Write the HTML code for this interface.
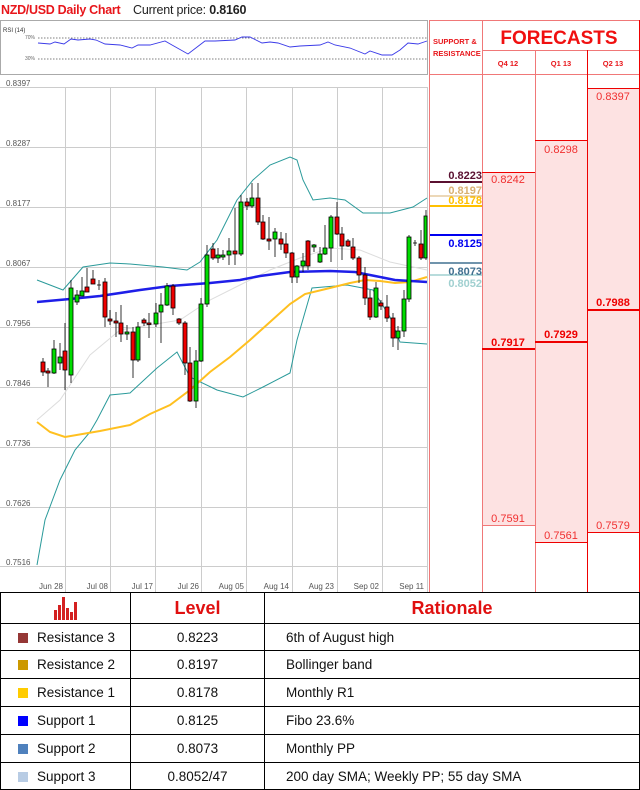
<!DOCTYPE html>
<html><head><meta charset="utf-8"><style>
*{margin:0;padding:0;box-sizing:border-box}
body{width:640px;height:790px;background:#fff;font-family:"Liberation Sans",sans-serif;position:relative;overflow:hidden}
.abs{position:absolute}
table{position:absolute;left:0;top:592px;width:640px;border-collapse:collapse;font-size:13.5px;color:#111;table-layout:fixed}
td{border:1px solid #000;padding:0;overflow:hidden;white-space:nowrap}
.sq{display:inline-block;width:10px;height:10px;margin:0 9px 0 17px;vertical-align:-1px}
</style></head><body>
<div class="abs" style="left:1px;top:3px;font-size:12.5px;font-weight:bold;color:#e8161b;letter-spacing:-0.3px">NZD/USD Daily Chart</div>
<div class="abs" style="left:133px;top:3px;font-size:12.5px;color:#222;letter-spacing:-0.2px">Current price: <b>0.8160</b></div>

<svg class="abs" style="left:0;top:0" width="640" height="592">
<rect x="0.5" y="20.5" width="427" height="54" fill="#fff" stroke="#aaa"/>
<text x="3" y="32" font-size="6" fill="#333">RSI (14)</text>
<text x="25" y="39" font-size="5" fill="#666">70%</text>
<text x="25" y="60" font-size="5" fill="#666">30%</text>
<line x1="38" y1="38" x2="427" y2="38" stroke="#555" stroke-dasharray="1.5,1.5" stroke-width="0.7"/>
<line x1="38" y1="59" x2="427" y2="59" stroke="#555" stroke-dasharray="1.5,1.5" stroke-width="0.7"/>
<polyline fill="none" stroke="#3a3ae8" stroke-width="0.9" points="38,43 50,44 55,42 64,44 71,39 78,40 90,39 96,40 105,44 120,45 132,48 138,45 150,45 165,41 172,45 188,54 205,41 215,41 235,40 242,37 250,37 262,43 270,42 278,43 290,47 300,46 320,45 328,42 335,45 350,48 365,54 370,51 382,55 392,55 400,50 408,43 418,44 427,41"/>
<g stroke="#ccc" stroke-width="1">
<line x1="0" y1="87.5" x2="427" y2="87.5"/><line x1="0" y1="147.5" x2="427" y2="147.5"/><line x1="0" y1="207.5" x2="427" y2="207.5"/><line x1="0" y1="267.5" x2="427" y2="267.5"/><line x1="0" y1="327.5" x2="427" y2="327.5"/><line x1="0" y1="387.5" x2="427" y2="387.5"/><line x1="0" y1="447.5" x2="427" y2="447.5"/><line x1="0" y1="507.5" x2="427" y2="507.5"/><line x1="0" y1="566.5" x2="427" y2="566.5"/>
<line x1="65.5" y1="87" x2="65.5" y2="592"/><line x1="110.5" y1="87" x2="110.5" y2="592"/><line x1="155.5" y1="87" x2="155.5" y2="592"/><line x1="201.5" y1="87" x2="201.5" y2="592"/><line x1="246.5" y1="87" x2="246.5" y2="592"/><line x1="292.5" y1="87" x2="292.5" y2="592"/><line x1="337.5" y1="87" x2="337.5" y2="592"/><line x1="382.5" y1="87" x2="382.5" y2="592"/><line x1="427.5" y1="87" x2="427.5" y2="592"/>
</g>
<g font-size="8" fill="#555">
<text x="6" y="86">0.8397</text><text x="6" y="146">0.8287</text><text x="6" y="206">0.8177</text><text x="6" y="266">0.8067</text><text x="6" y="326">0.7956</text><text x="6" y="386">0.7846</text><text x="6" y="446">0.7736</text><text x="6" y="506">0.7626</text><text x="6" y="565">0.7516</text>
</g>
<g font-size="8" fill="#555" text-anchor="end">
<text x="63" y="589">Jun 28</text><text x="108" y="589">Jul 08</text><text x="153" y="589">Jul 17</text><text x="199" y="589">Jul 26</text><text x="244" y="589">Aug 05</text><text x="289" y="589">Aug 14</text><text x="334" y="589">Aug 23</text><text x="379" y="589">Sep 02</text><text x="424" y="589">Sep 11</text>
</g>
<polyline fill="none" stroke="#ddd" stroke-width="1" points="37,420 60,400 90,355 120,330 150,325 180,320 210,300 240,285 270,270 300,258 330,248 360,250 390,262 427,270"/>
<polyline fill="none" stroke="#2a9a9a" stroke-width="1" points="37,280 63,290 83,267 110,263 130,264 163,267 187,270 200,262 217,240 237,200 253,180 270,165 290,157 297,160 303,180 313,200 330,198 345,200 363,213 390,213 413,207 427,198"/>
<polyline fill="none" stroke="#2a9a9a" stroke-width="1" points="37,565 45,520 60,480 75,450 90,432 97,420 110,395 130,393 157,368 177,352 190,377 217,390 243,397 263,387 290,373 297,340 312,288 347,285 373,290 390,317 400,342 427,344"/>
<polyline fill="none" stroke="#ffc020" stroke-width="2" points="37,422 50,432 65,437 100,431 130,425 150,414 170,405 190,390 210,372 230,357 250,340 270,322 290,304 305,294 330,288 350,283 365,280 380,281 395,283 410,282 427,277"/>
<polyline fill="none" stroke="#1e1ee8" stroke-width="2.5" points="37,302 70,299 100,296 140,290 170,286 210,283 240,280 260,276 290,272 330,271 355,272 375,276 395,280 427,282"/>
<g stroke="#000" stroke-width="0.8">
<line x1="43" y1="358" x2="43" y2="376"/><rect x="41" y="362" width="4" height="10" fill="#e00"/>
<line x1="48" y1="368" x2="48" y2="387"/><rect x="46" y="371" width="4" height="2" fill="#e00"/>
<line x1="54" y1="340" x2="54" y2="374"/><rect x="52" y="349" width="4" height="24" fill="#0d0"/>
<line x1="60" y1="343" x2="60" y2="370"/><rect x="58" y="357" width="4" height="6" fill="#0d0"/>
<line x1="65" y1="323" x2="65" y2="390"/><rect x="63" y="351" width="4" height="19" fill="#e00"/>
<line x1="71" y1="280" x2="71" y2="383"/><rect x="69" y="288" width="4" height="87" fill="#0d0"/>
<line x1="77" y1="290" x2="77" y2="305"/><rect x="75" y="295" width="4" height="7" fill="#0d0"/>
<line x1="82" y1="277" x2="82" y2="296"/><rect x="80" y="291" width="4" height="5" fill="#0d0"/>
<line x1="87" y1="268" x2="87" y2="292"/><rect x="85" y="287" width="4" height="5" fill="#e00"/>
<line x1="93" y1="270" x2="93" y2="284"/><rect x="91" y="279" width="4" height="5" fill="#e00"/>
<line x1="99" y1="280" x2="99" y2="290"/><line x1="97" y1="285" x2="101" y2="285"/>
<line x1="105" y1="278" x2="105" y2="327"/><rect x="103" y="282" width="4" height="35" fill="#e00"/>
<line x1="110" y1="310" x2="110" y2="325"/><rect x="108" y="319" width="4" height="2" fill="#e00"/>
<line x1="116" y1="312" x2="116" y2="337"/><rect x="114" y="321" width="4" height="2" fill="#e00"/>
<line x1="121" y1="305" x2="121" y2="342"/><rect x="119" y="323" width="4" height="11" fill="#e00"/>
<line x1="127" y1="325" x2="127" y2="340"/><rect x="125" y="332" width="4" height="2" fill="#0d0"/>
<line x1="133" y1="327" x2="133" y2="378"/><rect x="131" y="332" width="4" height="28" fill="#e00"/>
<line x1="138" y1="322" x2="138" y2="362"/><rect x="136" y="327" width="4" height="33" fill="#0d0"/>
<line x1="144" y1="318" x2="144" y2="326"/><rect x="142" y="320" width="4" height="3" fill="#e00"/>
<line x1="149" y1="313" x2="149" y2="338"/><rect x="147" y="323" width="4" height="1.5" fill="#e00"/>
<line x1="156" y1="303" x2="156" y2="327"/><rect x="154" y="313" width="4" height="11" fill="#0d0"/>
<line x1="161" y1="293" x2="161" y2="343"/><rect x="159" y="305" width="4" height="7" fill="#0d0"/>
<line x1="167" y1="283" x2="167" y2="306"/><rect x="165" y="286" width="4" height="19" fill="#0d0"/>
<line x1="173" y1="284" x2="173" y2="315"/><rect x="171" y="286" width="4" height="22" fill="#e00"/>
<line x1="179" y1="318" x2="179" y2="325"/><rect x="177" y="319" width="4" height="4" fill="#e00"/>
<line x1="185" y1="321" x2="185" y2="375"/><rect x="183" y="323" width="4" height="40" fill="#e00"/>
<line x1="190" y1="347" x2="190" y2="402"/><rect x="188" y="363" width="4" height="38" fill="#e00"/>
<line x1="196" y1="350" x2="196" y2="408"/><rect x="194" y="361" width="4" height="40" fill="#0d0"/>
<line x1="201" y1="298" x2="201" y2="362"/><rect x="199" y="304" width="4" height="57" fill="#0d0"/>
<line x1="207" y1="245" x2="207" y2="307"/><rect x="205" y="255" width="4" height="49" fill="#0d0"/>
<line x1="213" y1="243" x2="213" y2="260"/><rect x="211" y="249" width="4" height="9" fill="#e00"/>
<line x1="218" y1="248" x2="218" y2="263"/><rect x="216" y="255" width="4" height="3" fill="#0d0"/>
<line x1="223" y1="250" x2="223" y2="260"/><rect x="221" y="255" width="4" height="2" fill="#0d0"/>
<line x1="229" y1="238" x2="229" y2="265"/><rect x="227" y="251" width="4" height="4" fill="#0d0"/>
<line x1="235" y1="208" x2="235" y2="265"/><rect x="233" y="251" width="4" height="3" fill="#e00"/>
<line x1="241" y1="195" x2="241" y2="256"/><rect x="239" y="202" width="4" height="52" fill="#0d0"/>
<line x1="247" y1="198" x2="247" y2="210"/><rect x="245" y="202" width="4" height="4" fill="#e00"/>
<line x1="252" y1="183" x2="252" y2="208"/><rect x="250" y="198" width="4" height="8" fill="#0d0"/>
<line x1="258" y1="183" x2="258" y2="225"/><rect x="256" y="198" width="4" height="24" fill="#e00"/>
<line x1="263" y1="215" x2="263" y2="240"/><rect x="261" y="222" width="4" height="17" fill="#e00"/>
<line x1="269" y1="217" x2="269" y2="250"/><rect x="267" y="239" width="4" height="2" fill="#e00"/>
<line x1="275" y1="228" x2="275" y2="257"/><rect x="273" y="232" width="4" height="7" fill="#0d0"/>
<line x1="281" y1="232" x2="281" y2="250"/><rect x="279" y="239" width="4" height="5" fill="#e00"/>
<line x1="286" y1="233" x2="286" y2="258"/><rect x="284" y="244" width="4" height="9" fill="#e00"/>
<line x1="292" y1="252" x2="292" y2="283"/><rect x="290" y="253" width="4" height="24" fill="#e00"/>
<line x1="297" y1="265" x2="297" y2="283"/><rect x="295" y="266" width="4" height="11" fill="#0d0"/>
<line x1="303" y1="253" x2="303" y2="272"/><rect x="301" y="261" width="4" height="5" fill="#0d0"/>
<line x1="308" y1="240" x2="308" y2="270"/><rect x="306" y="241" width="4" height="25" fill="#e00"/>
<line x1="314" y1="244" x2="314" y2="252"/><rect x="312" y="245" width="4" height="2" fill="#0d0"/>
<line x1="320" y1="247" x2="320" y2="263"/><rect x="318" y="254" width="4" height="8" fill="#0d0"/>
<line x1="325" y1="225" x2="325" y2="255"/><rect x="323" y="248" width="4" height="6" fill="#0d0"/>
<line x1="331" y1="215" x2="331" y2="262"/><rect x="329" y="217" width="4" height="31" fill="#0d0"/>
<line x1="337" y1="202" x2="337" y2="235"/><rect x="335" y="217" width="4" height="17" fill="#e00"/>
<line x1="342" y1="227" x2="342" y2="260"/><rect x="340" y="234" width="4" height="12" fill="#e00"/>
<line x1="348" y1="239" x2="348" y2="247"/><rect x="346" y="241" width="4" height="5" fill="#e00"/>
<line x1="353" y1="238" x2="353" y2="260"/><rect x="351" y="247" width="4" height="11" fill="#e00"/>
<line x1="359" y1="256" x2="359" y2="283"/><rect x="357" y="258" width="4" height="17" fill="#e00"/>
<line x1="365" y1="267" x2="365" y2="305"/><rect x="363" y="275" width="4" height="23" fill="#e00"/>
<line x1="370" y1="290" x2="370" y2="320"/><rect x="368" y="298" width="4" height="19" fill="#e00"/>
<line x1="376" y1="282" x2="376" y2="318"/><rect x="374" y="288" width="4" height="29" fill="#0d0"/>
<line x1="381" y1="300" x2="381" y2="310"/><rect x="379" y="303" width="4" height="3" fill="#e00"/>
<line x1="387" y1="295" x2="387" y2="322"/><rect x="385" y="307" width="4" height="11" fill="#e00"/>
<line x1="393" y1="313" x2="393" y2="347"/><rect x="391" y="318" width="4" height="20" fill="#e00"/>
<line x1="398" y1="326" x2="398" y2="350"/><rect x="396" y="331" width="4" height="7" fill="#0d0"/>
<line x1="404" y1="290" x2="404" y2="337"/><rect x="402" y="299" width="4" height="32" fill="#0d0"/>
<line x1="409" y1="235" x2="409" y2="302"/><rect x="407" y="237" width="4" height="62" fill="#0d0"/>
<line x1="415" y1="240" x2="415" y2="246"/><line x1="413" y1="243" x2="417" y2="243"/>
<line x1="421" y1="230" x2="421" y2="260"/><rect x="419" y="244" width="4" height="14" fill="#e00"/>
<line x1="426" y1="210" x2="426" y2="260"/><rect x="424" y="216" width="3" height="42" fill="#0d0"/>
</g>
<rect x="482" y="74" width="53" height="518" fill="#fff"/>
<rect x="482" y="172" width="53" height="353" fill="#fde2e2"/>
<rect x="535" y="140" width="52" height="402" fill="#fde2e2"/>
<rect x="587" y="88" width="52" height="444" fill="#fde2e2"/>
<g stroke="#f07878" stroke-width="1">
<line x1="429.5" y1="20" x2="429.5" y2="592"/><line x1="482.5" y1="20" x2="482.5" y2="592"/><line x1="535.5" y1="50" x2="535.5" y2="592"/>
<line x1="429" y1="20.5" x2="640" y2="20.5"/><line x1="482" y1="50.5" x2="640" y2="50.5"/><line x1="429" y1="74.5" x2="640" y2="74.5"/>
<line x1="482" y1="525.5" x2="535" y2="525.5"/>
</g>
<g stroke="#e00" stroke-width="1">
<line x1="587.5" y1="50" x2="587.5" y2="592"/><line x1="639.5" y1="20" x2="639.5" y2="592"/>
<line x1="587" y1="88.5" x2="640" y2="88.5"/><line x1="587" y1="532.5" x2="640" y2="532.5"/>
<line x1="482" y1="172.5" x2="535" y2="172.5"/><line x1="535" y1="140.5" x2="587" y2="140.5"/>
<line x1="535" y1="542.5" x2="587" y2="542.5"/>
</g>
<g stroke="#e00" stroke-width="2">
<line x1="482" y1="349" x2="535" y2="349"/><line x1="535" y1="342" x2="587" y2="342"/><line x1="587" y1="310" x2="640" y2="310"/>
</g>
<text x="433" y="44" font-size="7.5" font-weight="bold" fill="#e8161b">SUPPORT &amp;</text>
<text x="433" y="56" font-size="7.5" font-weight="bold" fill="#e8161b">RESISTANCE</text>
<text x="559" y="44" font-size="19" font-weight="bold" fill="#f01010" text-anchor="middle">FORECASTS</text>
<g font-size="7.5" font-weight="bold" fill="#e8161b" text-anchor="middle"><text x="508" y="66">Q4 12</text><text x="561" y="66">Q1 13</text><text x="613" y="66">Q2 13</text></g>
<g font-size="11" fill="#f03030" text-anchor="middle"><text x="508" y="183">0.8242</text><text x="561" y="153">0.8298</text><text x="613" y="100">0.8397</text><text x="508" y="522">0.7591</text><text x="561" y="539">0.7561</text><text x="613" y="529">0.7579</text></g>
<g font-size="11" font-weight="bold" fill="#e00" text-anchor="middle"><text x="508" y="346">0.7917</text><text x="561" y="338">0.7929</text><text x="613" y="306">0.7988</text></g>
<line x1="430" y1="182" x2="482" y2="182" stroke="#5a1030" stroke-width="2"/>
<line x1="430" y1="196" x2="482" y2="196" stroke="#d9b070" stroke-width="1"/>
<line x1="430" y1="206" x2="482" y2="206" stroke="#ffc000" stroke-width="2"/>
<line x1="430" y1="235" x2="482" y2="235" stroke="#0000f0" stroke-width="2"/>
<line x1="430" y1="263" x2="482" y2="263" stroke="#407090" stroke-width="1.5"/>
<line x1="430" y1="275" x2="482" y2="275" stroke="#a0d0d0" stroke-width="1.5"/>
<g font-size="11" font-weight="bold" text-anchor="end">
<text x="482" y="179" fill="#5a1030">0.8223</text><text x="482" y="194" fill="#d9b070">0.8197</text><text x="482" y="204" fill="#ffc000">0.8178</text>
<text x="482" y="247" fill="#0000f0">0.8125</text><text x="482" y="275" fill="#407090">0.8073</text><text x="482" y="287" fill="#a0d0d0">0.8052</text>
</g>
</svg>

<table>
<colgroup><col style="width:130px"><col style="width:134px"><col></colgroup>
<tr style="height:31px"><td style="text-align:center"><svg width="26" height="24" viewBox="0 0 26 24" style="vertical-align:middle"><g fill="#d42020"><rect x="1" y="14" width="3" height="10"/><rect x="5" y="9" width="3" height="15"/><rect x="9" y="1" width="3" height="23"/><rect x="13" y="12" width="3" height="12"/><rect x="17" y="16" width="3" height="8"/><rect x="21" y="6" width="3" height="18"/></g></svg></td><td style="text-align:center;color:#e01010;font-weight:bold;font-size:18px">Level</td><td style="text-align:center;color:#e01010;font-weight:bold;font-size:18px">Rationale</td></tr>
<tr style="height:27px"><td><span class="sq" style="background:#953735"></span>Resistance 3</td><td style="text-align:center">0.8223</td><td style="padding-left:21px">6th of August high</td></tr>
<tr style="height:28px"><td><span class="sq" style="background:#cc9900"></span>Resistance 2</td><td style="text-align:center">0.8197</td><td style="padding-left:21px">Bollinger band</td></tr>
<tr style="height:28px"><td><span class="sq" style="background:#ffcc00"></span>Resistance 1</td><td style="text-align:center">0.8178</td><td style="padding-left:21px">Monthly R1</td></tr>
<tr style="height:28px"><td><span class="sq" style="background:#0000ff"></span>Support 1</td><td style="text-align:center">0.8125</td><td style="padding-left:21px">Fibo 23.6%</td></tr>
<tr style="height:28px"><td><span class="sq" style="background:#4f81bd"></span>Support 2</td><td style="text-align:center">0.8073</td><td style="padding-left:21px">Monthly PP</td></tr>
<tr style="height:27px"><td><span class="sq" style="background:#b8cce4"></span>Support 3</td><td style="text-align:center">0.8052/47</td><td style="padding-left:21px">200 day SMA; Weekly PP; 55 day SMA</td></tr>
</table>
</body></html>
